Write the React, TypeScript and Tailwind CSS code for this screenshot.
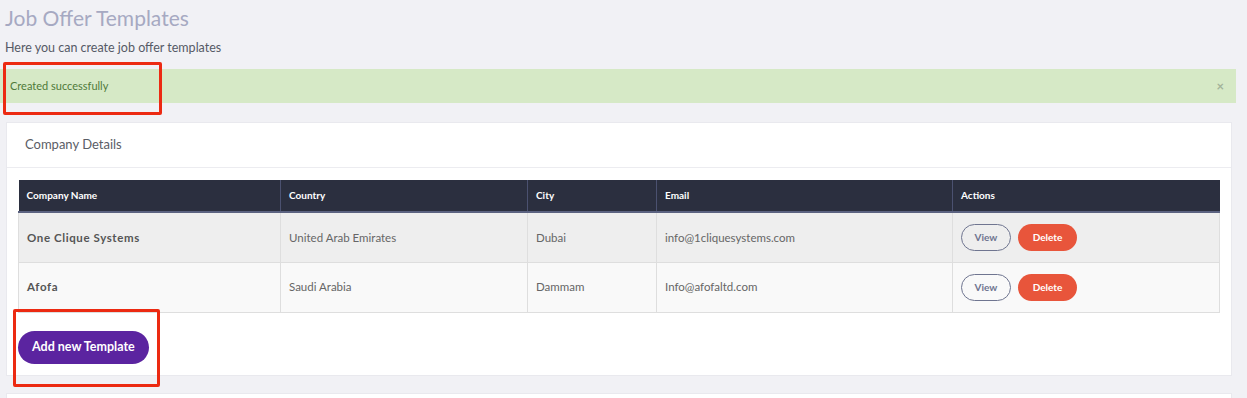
const rows = [
  { name: "One Clique Systems", country: "United Arab Emirates", city: "Dubai", email: "info@1cliquesystems.com", bg: "bg-[#eeeeee]" },
  { name: "Afofa", country: "Saudi Arabia", city: "Dammam", email: "Info@afofaltd.com", bg: "bg-[#f9f9f9]" },
]

const App = () => {
  return (
    <div className="relative w-[1247px] h-[398px] overflow-hidden bg-[#f1f1f5] font-['Lato','Open_Sans',sans-serif]">
      <div className="pl-[5px] pt-[6px]">
        <h1 className="text-[21px] leading-[24px] text-[#a6a9c2]">Job Offer Templates</h1>
        <p className="mt-[10px] text-[12.5px] leading-[16px] text-[#555a66]">Here you can create job offer templates</p>
      </div>

      <div className="mt-[13px] mr-[11px] h-[34px] bg-[#d6e9c6] flex items-center justify-between pl-[10px] pr-[12px]">
        <span className="text-[11px] text-[#4f7a3a]">Created successfully</span>
        <span className="text-[13px] font-bold text-[#a3b39a] leading-none">×</span>
      </div>

      <div className="mt-[19px] ml-[6px] mr-[15px] bg-white border border-[#e9e9ee]">
        <div className="h-[45px] flex items-center pl-[18px] border-b border-[#ececf0]">
          <span className="text-[13px] text-[#5a5d66]">Company Details</span>
        </div>
        <div className="px-[11px] pt-[12px] pb-[11px]">
          <table className="w-full border-collapse table-fixed">
            <colgroup>
              <col className="w-[262px]" />
              <col className="w-[247px]" />
              <col className="w-[129px]" />
              <col className="w-[296px]" />
              <col />
            </colgroup>
            <thead>
              <tr className="bg-[#2b2f3f] h-[32px] border-b-2 border-[#5b6280]">
                {["Company Name", "Country", "City", "Email", "Actions"].map((h, i) => (
                  <th key={h} className={`text-left text-[10px] font-bold text-white pl-[8px] ${i > 0 ? "border-l border-[#4b5170]" : ""}`}>{h}</th>
                ))}
              </tr>
            </thead>
            <tbody>
              {rows.map((r) => (
                <tr key={r.name} className={`${r.bg} h-[50px] border-b border-[#dedede]`}>
                  <td className="pl-[8px] text-[11.5px] font-bold tracking-[0.6px] text-[#555] border-l border-[#dedede]">{r.name}</td>
                  <td className="pl-[8px] text-[11.5px] text-[#666] border-l border-[#dedede]">{r.country}</td>
                  <td className="pl-[8px] text-[11.5px] text-[#666] border-l border-[#dedede]">{r.city}</td>
                  <td className="pl-[8px] text-[11.5px] text-[#666] border-l border-[#dedede]">{r.email}</td>
                  <td className="pl-[8px] border-l border-r border-[#dedede]">
                    <div className="flex gap-[7px]">
                      <button className="w-[50px] h-[27px] rounded-full border border-[#6f7590] text-[10px] font-bold text-[#6f7590] bg-transparent">View</button>
                      <button className="w-[59px] h-[27px] rounded-full bg-[#e8553b] text-[10px] font-bold text-white">Delete</button>
                    </div>
                  </td>
                </tr>
              ))}
            </tbody>
          </table>
          <button className="mt-[18px] h-[33px] px-[14px] rounded-full bg-[#5b24a0] text-white text-[12.5px] font-bold">Add new Template</button>
        </div>
      </div>

      <div className="mt-[17px] ml-[6px] mr-[15px] h-[20px] bg-white border border-[#e9e9ee]"></div>

      <div className="absolute left-[3px] top-[62px] w-[159px] h-[53px] border-[3px] border-[#ec2a12] rounded-[2px]"></div>
      <div className="absolute left-[13px] top-[309px] w-[147px] h-[78px] border-[3px] border-[#ec2a12] rounded-[2px]"></div>
    </div>
  )
}

export default App
